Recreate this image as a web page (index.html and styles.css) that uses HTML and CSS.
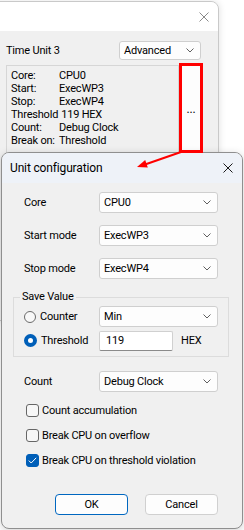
FILE: index.html
```html
<!DOCTYPE html>
<html>
<head>
<meta charset="utf-8">
<link rel="stylesheet" href="styles.css">
</head>
<body>
<div class="desk">
  <div class="win back">
    <div class="titlebar back-title">
      <svg class="x-icon" width="10" height="10" viewBox="0 0 10 10"><path d="M0.5 0.5 L9.5 9.5 M9.5 0.5 L0.5 9.5" stroke="#8a8a8a" stroke-width="1" fill="none"/></svg>
    </div>
    <div class="back-body">
      <div class="unit-row">
        <span>Time Unit 3</span>
        <div class="select small">
          <span>Advanced</span>
          <svg class="chev" width="8" height="5" viewBox="0 0 8 5"><polyline points="0.5,0.5 4,4 7.5,0.5" fill="none" stroke="#5f5f5f" stroke-width="1"/></svg>
        </div>
      </div>
      <div class="info-row">
        <div class="info">
          <div class="il"><span class="k">Core:</span><span>CPU0</span></div>
          <div class="il"><span class="k">Start:</span><span>ExecWP3</span></div>
          <div class="il"><span class="k">Stop:</span><span>ExecWP4</span></div>
          <div class="il"><span class="k wide">Threshold</span><span>119 HEX</span></div>
          <div class="il"><span class="k">Count:</span><span>Debug Clock</span></div>
          <div class="il"><span class="k">Break on:</span><span>Threshold</span></div>
        </div>
        <div class="dots">...</div>
      </div>
    </div>
  </div>

  <div class="win front">
    <div class="titlebar front-title">
      <span class="title">Unit configuration</span>
      <svg class="x-icon" width="10" height="10" viewBox="0 0 10 10"><path d="M0.5 0.5 L9.5 9.5 M9.5 0.5 L0.5 9.5" stroke="#1a1a1a" stroke-width="1" fill="none"/></svg>
    </div>
    <div class="front-body">
      <div class="row">
        <span class="lbl">Core</span>
        <div class="select wide-sel"><span>CPU0</span><svg class="chev" width="8" height="5" viewBox="0 0 8 5"><polyline points="0.5,0.5 4,4 7.5,0.5" fill="none" stroke="#5f5f5f" stroke-width="1"/></svg></div>
      </div>
      <div class="row gap">
        <span class="lbl">Start mode</span>
        <div class="select wide-sel"><span>ExecWP3</span><svg class="chev" width="8" height="5" viewBox="0 0 8 5"><polyline points="0.5,0.5 4,4 7.5,0.5" fill="none" stroke="#5f5f5f" stroke-width="1"/></svg></div>
      </div>
      <div class="row gap">
        <span class="lbl">Stop mode</span>
        <div class="select wide-sel"><span>ExecWP4</span><svg class="chev" width="8" height="5" viewBox="0 0 8 5"><polyline points="0.5,0.5 4,4 7.5,0.5" fill="none" stroke="#5f5f5f" stroke-width="1"/></svg></div>
      </div>

      <fieldset class="group">
        <legend>Save Value</legend>
        <div class="row">
          <span class="lbl radio-lbl"><span class="radio"></span>Counter</span>
          <div class="select wide-sel"><span>Min</span><svg class="chev" width="8" height="5" viewBox="0 0 8 5"><polyline points="0.5,0.5 4,4 7.5,0.5" fill="none" stroke="#5f5f5f" stroke-width="1"/></svg></div>
        </div>
        <div class="row gap-s">
          <span class="lbl radio-lbl"><span class="radio on"></span>Threshold</span>
          <div class="input">119</div>
          <span class="hex">HEX</span>
        </div>
      </fieldset>

      <div class="row count-row">
        <span class="lbl">Count</span>
        <div class="select wide-sel"><span>Debug Clock</span><svg class="chev" width="8" height="5" viewBox="0 0 8 5"><polyline points="0.5,0.5 4,4 7.5,0.5" fill="none" stroke="#5f5f5f" stroke-width="1"/></svg></div>
      </div>

      <div class="checks">
        <div class="check"><span class="box"></span>Count accumulation</div>
        <div class="check"><span class="box"></span>Break CPU on overflow</div>
        <div class="check"><span class="box on"><svg width="9" height="7" viewBox="0 0 9 7"><polyline points="0.8,3.6 3.2,6 8.2,0.8" fill="none" stroke="#ffffff" stroke-width="1"/></svg></span>Break CPU on threshold violation</div>
      </div>

      <div class="buttons">
        <div class="btn default">OK</div>
        <div class="btn">Cancel</div>
      </div>
    </div>
  </div>

  <svg class="overlay" width="244" height="530" viewBox="0 0 244 530">
    <rect x="180.5" y="64.5" width="21" height="87" fill="none" stroke="#ff0000" stroke-width="3"/>
    <line x1="181" y1="152" x2="145" y2="164.5" stroke="#ff0000" stroke-width="2"/>
    <polygon points="137,167 145.2,159.9 147.8,167.5" fill="#ff0000"/>
  </svg>
</div>
</body>
</html>
```
FILE: styles.css
```css
* { box-sizing: border-box; }
html, body {
  margin: 0;
  padding: 0;
  width: 244px;
  height: 530px;
  overflow: hidden;
  background: #ffffff;
}
body {
  font-family: Roboto, "Noto Sans", "Liberation Sans", sans-serif;
  font-size: 11px;
  letter-spacing: -0.2px;
  color: #000;
}
.desk {
  position: relative;
  width: 244px;
  height: 530px;
  background: #ffffff;
}
.win {
  position: absolute;
  display: flex;
  flex-direction: column;
  background: #f0f0f0;
  overflow: hidden;
}
.back {
  left: -10px;
  top: 1px;
  width: 229px;
  height: 320px;
  border: 1px solid #c9c9c9;
  border-radius: 0 8px 0 0;
  box-shadow: 1px 0 6px rgba(0,0,0,0.10);
}
.titlebar {
  display: flex;
  align-items: center;
  flex: none;
}
.back-title {
  height: 29px;
  background: #ffffff;
  justify-content: flex-end;
  padding-right: 9px;
}
.back-body {
  padding: 10px 17px 0 15px;
  display: flex;
  flex-direction: column;
}
.unit-row {
  display: flex;
  align-items: center;
  justify-content: space-between;
  height: 19px;
}
.select {
  display: flex;
  align-items: center;
  justify-content: space-between;
  background: #fdfdfd;
  border: 1px solid #cfcfcf;
  border-radius: 3px;
  padding: 0 6px 0 4px;
}
.select.small {
  width: 82px;
  height: 19px;
}
.info-row {
  display: flex;
  margin-top: 5px;
  height: 88px;
  gap: 2px;
}
.info {
  flex: 1;
  border: 1px solid #d6d6d6;
  border-bottom: none;
  padding: 3px 0 0 4px;
  line-height: 13px;
}
.il { display: flex; white-space: nowrap; }
.k { width: 48px; flex: none; }
.k.wide { width: auto; margin-right: 3px; }
.dots {
  width: 20px;
  background: #fdfdfd;
  border: 1px solid #d0d0d0;
  display: flex;
  align-items: center;
  justify-content: center;
  font-size: 12px;
}

.front {
  left: 1px;
  top: 152px;
  width: 242px;
  height: 377px;
  border: 1px solid #8f8f8f;
  border-radius: 8px;
  box-shadow: 0 2px 8px rgba(0,0,0,0.18);
}
.front-title {
  height: 30px;
  background: #eef2f8;
  justify-content: space-between;
  padding: 0 9px 0 8px;
}
.title {
  font-size: 12px;
  letter-spacing: -0.15px;
  padding-bottom: 1px;
}
.front-body {
  padding: 9px 24px 0 22px;
  display: flex;
  flex-direction: column;
}
.row {
  display: flex;
  align-items: center;
  height: 21px;
}
.row.gap { margin-top: 12px; }
.row.gap-s { margin-top: 3px; }
.lbl {
  width: 75px;
  flex: none;
  display: flex;
  align-items: center;
}
.wide-sel {
  width: 119px;
  height: 21px;
}
.group {
  margin: 10px -11px 0 -11px;
  padding: 1px 10px 5px 10px;
  border: 1px solid #dcdcdc;
  border-radius: 0;
  min-width: 0;
}
.group legend {
  padding: 0 2px;
  margin-left: -4px;
  line-height: 16px;
}
.radio-lbl { gap: 4px; }
.radio {
  width: 12px;
  height: 12px;
  border-radius: 50%;
  border: 1px solid #6a6a6a;
  background: #f8f8f8;
  flex: none;
}
.radio.on {
  width: 13px;
  height: 13px;
  border: 4px solid #005fb8;
  background: #ffffff;
}
.input {
  width: 74px;
  height: 20px;
  background: #ffffff;
  border: 1px solid #d0d0d0;
  border-bottom-color: #8a8a8a;
  border-radius: 2px;
  padding-left: 6px;
  display: flex;
  align-items: center;
}
.hex { margin-left: 8px; }
.count-row { margin-top: 14px; }
.checks {
  display: flex;
  flex-direction: column;
  gap: 11px;
  margin-top: 11px;
}
.check {
  display: flex;
  align-items: center;
  gap: 3px;
  height: 14px;
  padding-left: 2px;
}
.box {
  width: 13px;
  height: 13px;
  border: 1px solid #666;
  border-radius: 3px;
  background: #f7f7f7;
  flex: none;
  display: flex;
  align-items: center;
  justify-content: center;
}
.box.on {
  background: #005fb8;
  border-color: #005fb8;
}
.buttons {
  display: flex;
  justify-content: flex-end;
  gap: 17px;
  margin-top: 27px;
}
.btn {
  width: 73px;
  height: 21px;
  border: 1px solid #d0d0d0;
  border-radius: 4px;
  background: #fdfdfd;
  display: flex;
  align-items: center;
  justify-content: center;
}
.btn.default {
  border-color: #0067c0;
}
.overlay {
  position: absolute;
  left: 0;
  top: 0;
  pointer-events: none;
}
```
